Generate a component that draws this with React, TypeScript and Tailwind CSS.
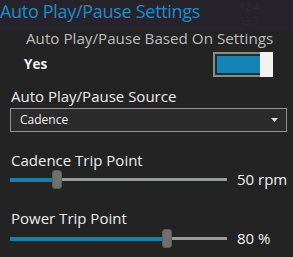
import React from "react";

function Slider({ fill, value }: { fill: number; value: string }) {
  return (
    <div className="flex items-center h-[19px] pl-[10px] gap-[10px]">
      <div className="flex items-center w-[217px] h-[19px]">
        <div className="h-[4px] bg-[#1b7fae]" style={{ width: fill }} />
        <div className="w-[10px] h-[19px] shrink-0 rounded-[3px] bg-[#6f716e] border border-[#5a5c59]" />
        <div className="flex-1 h-[3px] bg-[#9a9c98]" />
      </div>
      <span className="text-[15px] leading-none text-[#f0f0f0]">{value}</span>
    </div>
  );
}

export default function App() {
  return (
    <div
      className="w-[293px] h-[257px] overflow-hidden bg-[#232323] text-white flex flex-col"
      style={{ fontFamily: '"Open Sans", "Noto Sans", sans-serif' }}
    >
      <div className="h-[31px] bg-[#26242a] flex items-start justify-between">
        <div className="text-[18px] leading-[22px] text-[#1e8bd0] tracking-[-0.3px]">
          Auto Play/Pause Settings
        </div>
        <div className="flex flex-col gap-[2px] mr-[34px] mt-[1px] text-[10px] leading-[12px] text-[#2d2b33]">
          <span>12.4</span>
          <span>13.7</span>
        </div>
      </div>
      <div className="mt-[-2px] pl-[26px] text-[15.2px] leading-[18px] text-[#bdbdbd] whitespace-nowrap">
        Auto Play/Pause Based On Settings
      </div>
      <div className="mt-[5px] flex items-center justify-between pl-[24px] pr-[20px] h-[25px]">
        <span className="text-[13.5px] font-bold text-[#f4f4f4]">Yes</span>
        <div className="flex w-[60px] h-[25px]">
          <div className="flex-1 border-2 border-r-0 border-[#8c8c84] bg-[#2a2a2a] p-[2px] pr-0">
            <div className="h-full bg-[#1683b6]" />
          </div>
          <div className="w-[13px] h-[25px] bg-[#f2f2f2]" />
        </div>
      </div>
      <div className="mt-[10px] pl-[11px] text-[15px] leading-[18px] text-[#ececec]">
        Auto Play/Pause Source
      </div>
      <div className="mt-[3px] mx-[10px] w-[277px] h-[24px] border border-[#8f8f8f] bg-[#2b2b2b] flex items-center justify-between pl-[9px] pr-[8px]">
        <span className="text-[12px] text-[#f4f4f4]">Cadence</span>
        <svg width="7" height="4" viewBox="0 0 7 4">
          <path d="M0 0 L7 0 L3.5 4 Z" fill="#e0e0e0" />
        </svg>
      </div>
      <div className="mt-[19px] pl-[11px] text-[15px] leading-[18px] text-[#ececec]">Cadence Trip Point</div>
      <div className="mt-[1px]">
        <Slider fill={42} value="50 rpm" />
      </div>
      <div className="mt-[20px] pl-[11px] text-[15px] leading-[18px] text-[#ececec]">Power Trip Point</div>
      <div className="mt-[2px]">
        <Slider fill={152} value="80 %" />
      </div>
    </div>
  );
}
